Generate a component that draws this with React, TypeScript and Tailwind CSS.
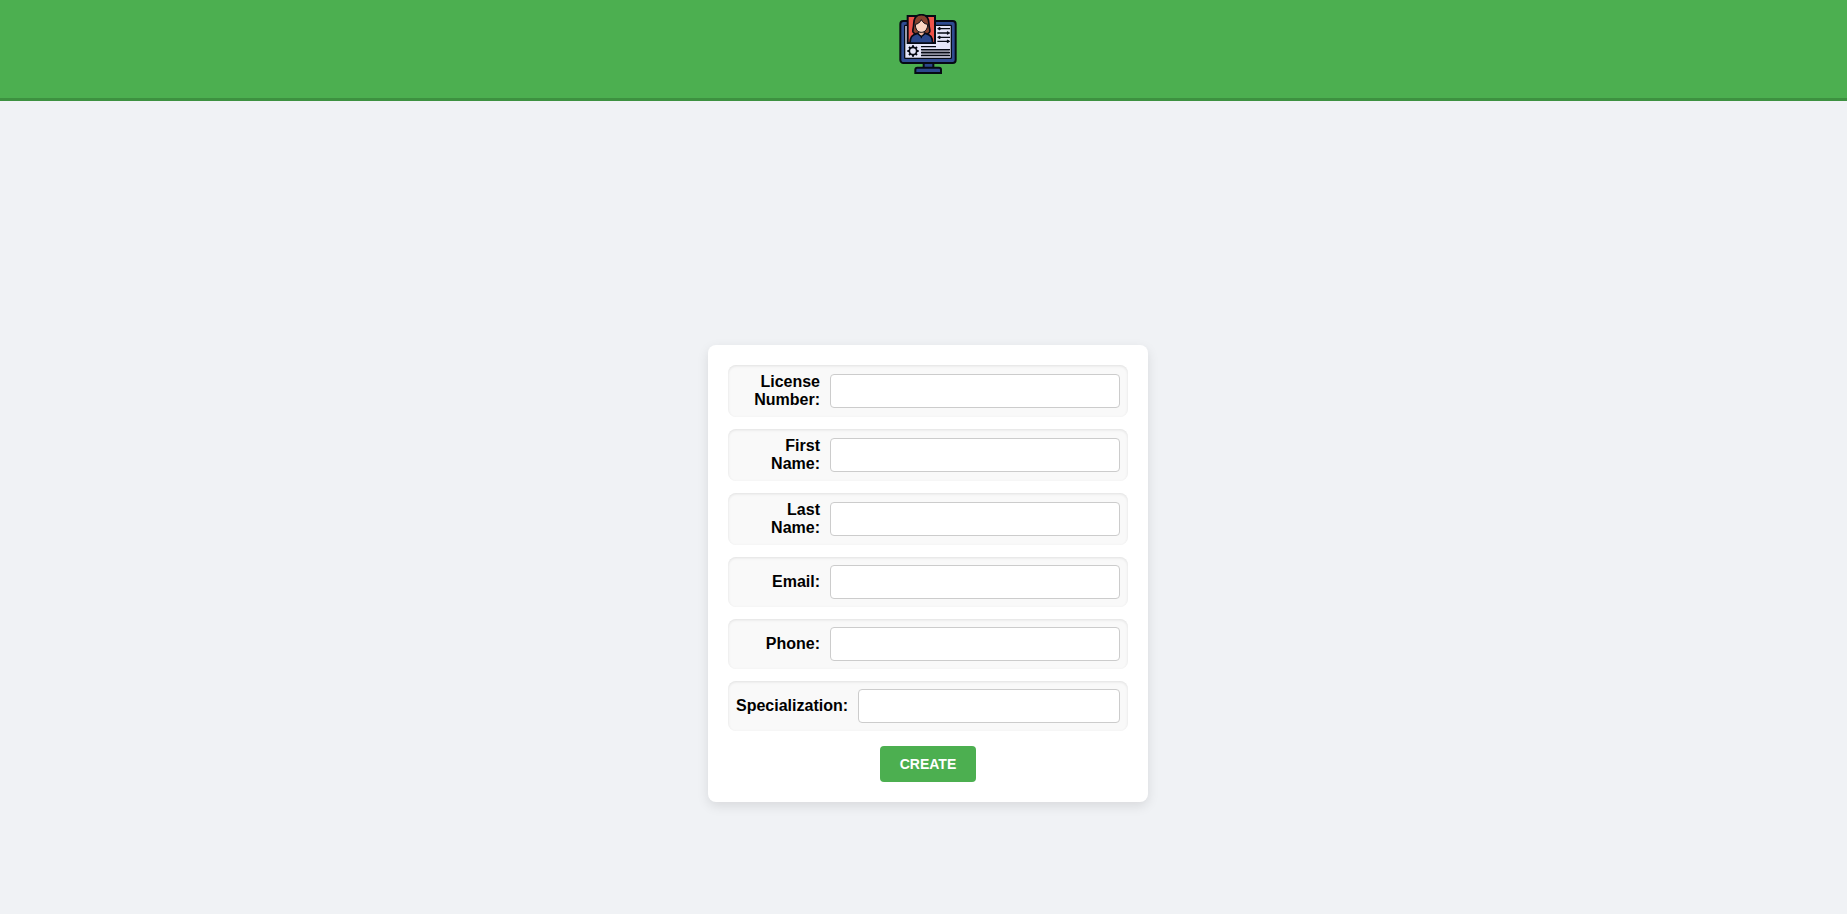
import React from "react";

type Field = { id: string; label: string; type: string };

const fields: Field[] = [
  { id: "licenseNumber", label: "License Number:", type: "text" },
  { id: "firstName", label: "First Name:", type: "text" },
  { id: "lastName", label: "Last Name:", type: "text" },
  { id: "email", label: "Email:", type: "email" },
  { id: "phone", label: "Phone:", type: "tel" },
  { id: "specialization", label: "Specialization:", type: "text" },
];

const gearAngles = [0, 45, 90, 135, 180, 225, 270, 315];

function Logo() {
  return (
    <svg viewBox="0 0 180 180" className="size-[60px]" aria-hidden="true">
      {/* stand */}
      <path d="M77 146h29v18H77z" fill="#2b478b" stroke="#060a14" strokeWidth="6" />
      <path d="M58 161h65q6 0 6 6v10H52v-10q0-6 6-6z" fill="#2b478b" stroke="#060a14" strokeWidth="6" />
      {/* monitor */}
      <rect x="7" y="21" width="166" height="126" rx="9" fill="#2f4b91" stroke="#060a14" strokeWidth="6" />
      <rect x="20" y="34" width="140" height="99" rx="2" fill="#e4e5f8" stroke="#060a14" strokeWidth="4" />
      {/* portrait */}
      <rect x="29" y="6" width="82" height="81" fill="#ee534a" stroke="#060a14" strokeWidth="6" />
      <path
        d="M70 2C53 2 47 15 47 31c0 12-4 15-2 23 4 8 13 7 25 7s21 1 25-7c2-8-2-11-2-23C93 15 87 2 70 2z"
        fill="#85422e"
        stroke="#060a14"
        strokeWidth="5"
      />
      <path d="M36 87c0-18 6-25 22-29h24c16 4 22 11 22 29z" fill="#2b478b" stroke="#060a14" strokeWidth="5" />
      <path d="M62 50h16v11l-8 5-8-5z" fill="#efb49c" stroke="#060a14" strokeWidth="2" />
      <path d="M52 31c8-1 13-5 18-14 4 8 10 13 19 14 0 15-8 24-19 24s-18-9-18-24z" fill="#fbd5c2" stroke="#060a14" strokeWidth="3" />
      <path d="M60 60l10 8 10-8M70 68v5" fill="none" stroke="#060a14" strokeWidth="4" />
      {/* arrows */}
      <g stroke="#060a14" fill="#060a14">
        <path d="M124 44h32M118 57h32M124 70h32M118 82h32" strokeWidth="4" />
        <path d="M119 44l7-4v8zM155 57l-7-4v8zM119 70l7-4v8zM155 82l-7-4v8z" strokeWidth="3" />
      </g>
      {/* gear */}
      <g fill="none" stroke="#060a14">
        <circle cx="45" cy="111" r="11" strokeWidth="5" />
        {gearAngles.map((angle) => (
          <path key={angle} d="M45 100v-6" strokeWidth="6" transform={`rotate(${angle} 45 111)`} />
        ))}
      </g>
      {/* text lines */}
      <path d="M70 107h85v18H70z" fill="#8d8e9c" />
      <path d="M69 98h45M69 107h87M69 116h87M69 125h87" stroke="#060a14" strokeWidth="4" />
    </svg>
  );
}

export default function App() {
  return (
    <div className="flex min-h-screen flex-col bg-[#f0f2f5] font-['Liberation_Sans',Arial,sans-serif] text-black">
      <header className="flex justify-center border-b-3 border-[#3d9140] bg-[#4caf50] pt-[14px] pb-6 pl-[9px]">
        <Logo />
      </header>
      <main className="flex flex-1 items-center justify-center pt-[132px] pl-[9px]">
        <form
          className="flex w-full max-w-[440px] flex-col gap-3 rounded-lg bg-white p-5 shadow-[0_4px_12px_rgba(0,0,0,0.1)]"
          onSubmit={(event) => event.preventDefault()}
        >
          {fields.map((field) => (
            <div
              key={field.id}
              className="flex items-center gap-[10px] rounded-lg bg-[#f9f9f9] p-2 shadow-[inset_0_1px_3px_rgba(0,0,0,0.1)]"
            >
              <label
                htmlFor={field.id}
                className="w-[84px] min-w-min shrink-0 text-right text-base leading-[18px] font-bold"
              >
                {field.label}
              </label>
              <input
                id={field.id}
                name={field.id}
                type={field.type}
                className="h-[34px] min-w-0 flex-1 rounded border border-[#ccc] bg-white px-2 text-sm"
              />
            </div>
          ))}
          <button
            type="submit"
            className="mt-[3px] self-center rounded bg-[#4caf50] px-5 py-[10px] text-sm leading-4 font-bold text-white uppercase"
          >
            Create
          </button>
        </form>
      </main>
    </div>
  );
}
